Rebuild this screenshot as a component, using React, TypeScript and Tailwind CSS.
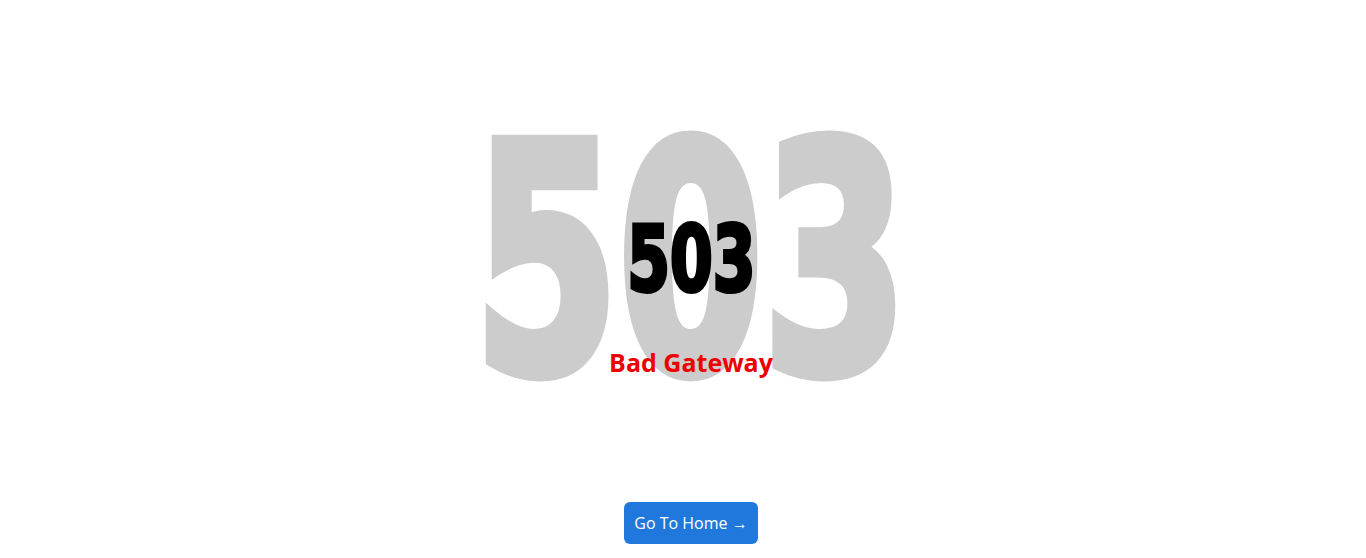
import React from "react";

export default function App() {
  return (
    <div className="min-h-screen bg-white flex flex-col items-center pl-4 font-['Open_Sans',sans-serif]">
      <div className="grid mt-[104px] justify-items-center">
        <h1 className="[grid-area:1/1] self-start text-[316px] leading-none font-bold text-[#cccccc] font-['DejaVu_Sans_Condensed',sans-serif] scale-x-73 [-webkit-text-stroke:12px_#cccccc] select-none">
          503
        </h1>
        <div className="[grid-area:1/1] relative z-10 self-start flex flex-col items-center pt-[110px]">
          <h2 className="text-[91px] leading-none font-bold text-black font-['DejaVu_Sans_Condensed',sans-serif] scale-x-75 [-webkit-text-stroke:4px_#000]">
            503
          </h2>
          <p className="mt-[41px] text-[25px] leading-8 font-bold text-[#ee0000]">Bad Gateway</p>
        </div>
      </div>
      <a
        href="#"
        className="mt-[82px] h-[42px] px-[10px] flex items-center rounded-md bg-[#2178dc] text-white text-base"
      >
        Go To Home &rarr;
      </a>
    </div>
  );
}
